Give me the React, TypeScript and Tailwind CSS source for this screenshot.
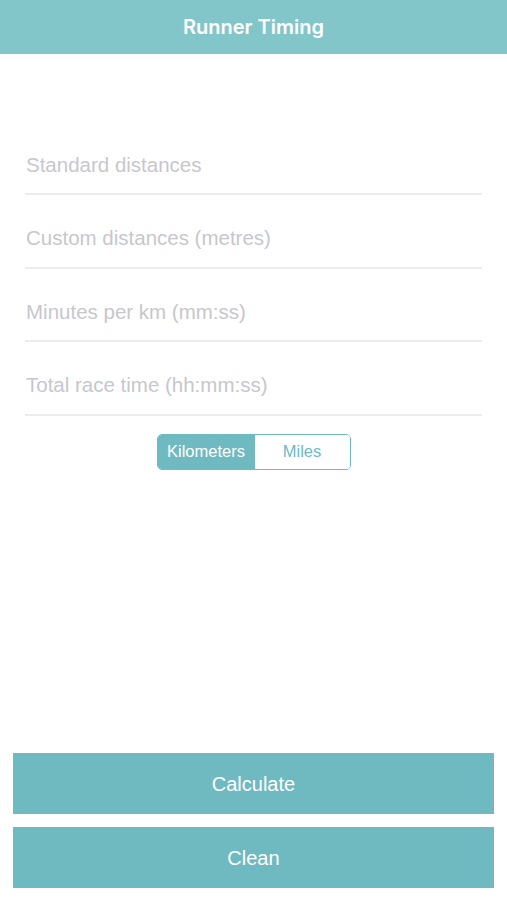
import React from "react";

export default function App() {
  const fields = [
    "Standard distances",
    "Custom distances (metres)",
    "Minutes per km (mm:ss)",
    "Total race time (hh:mm:ss)",
  ];
  return (
    <div className="flex h-[900px] w-full flex-col bg-white">
      <div className="flex h-[54px] items-center justify-center bg-[#82c6ca]">
        <span className="text-[20px] font-semibold text-white" style={{ fontFamily: "Inter, 'Noto Sans', sans-serif" }}>
          Runner Timing
        </span>
      </div>
      <div className="mt-[68px] flex flex-col px-[25px]">
        {fields.map((f) => (
          <div key={f} className="h-[73.4px] border-b-2 border-[#ececec] pt-[32px]">
            <span
              className="block pl-[1px] text-[20.5px] leading-[22px] text-[#c7c7cc]"
              style={{ fontFamily: "'Liberation Sans', Arial, sans-serif" }}
            >
              {f}
            </span>
          </div>
        ))}
      </div>
      <div className="mt-[18px] flex justify-center">
        <div
          className="flex h-[36px] w-[194px] overflow-hidden rounded-[5px] border-[1.5px] border-[#6fbac1] text-[16.5px]"
          style={{ fontFamily: "'Liberation Sans', Arial, sans-serif" }}
        >
          <div className="flex w-[97px] items-center justify-center bg-[#6fbac1] text-white">Kilometers</div>
          <div className="flex flex-1 items-center justify-center bg-white text-[#6fbac1]">Miles</div>
        </div>
      </div>
      <div className="flex-1" />
      <div
        className="flex flex-col gap-[13px] px-[13px] pb-[12px]"
        style={{ fontFamily: "'Liberation Sans', Arial, sans-serif" }}
      >
        <button className="h-[61px] w-full bg-[#6fbac1] text-[20px] text-white">Calculate</button>
        <button className="h-[61px] w-full bg-[#6fbac1] text-[20px] text-white">Clean</button>
      </div>
    </div>
  );
}
